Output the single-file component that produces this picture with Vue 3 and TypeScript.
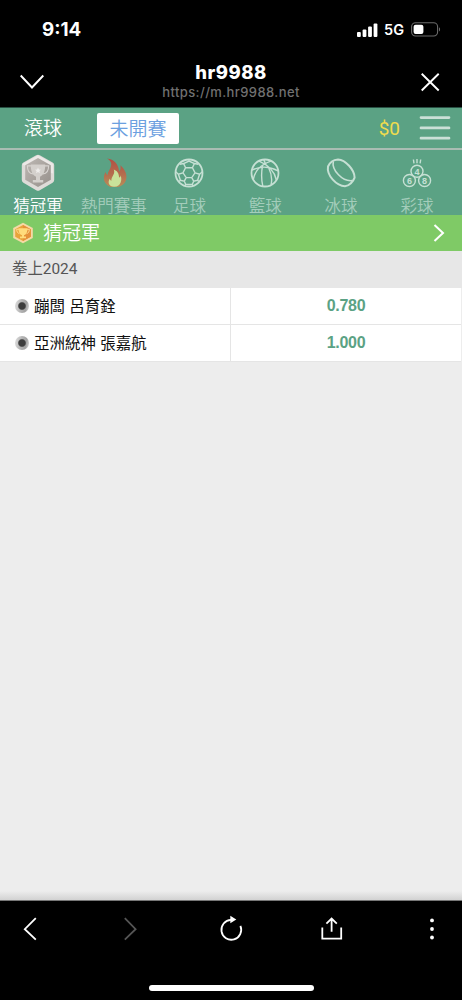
<script setup lang="ts">
import { ref } from 'vue'

interface Sport {
  id: string
  label: string
}

interface Selection {
  name: string
  odds: string
}

const sports: Sport[] = [
  { id: 'champion', label: '猜冠軍' },
  { id: 'hot', label: '熱門賽事' },
  { id: 'soccer', label: '足球' },
  { id: 'basketball', label: '籃球' },
  { id: 'hockey', label: '冰球' },
  { id: 'lottery', label: '彩球' },
]

const selections: Selection[] = [
  { name: '蹦闆 呂育銓', odds: '0.780' },
  { name: '亞洲統神 張嘉航', odds: '1.000' },
]

const active = ref('champion')
</script>

<template>
  <div class="screen">
    <header class="chrome-top">
      <div class="status">
        <span class="time">9:14</span>
        <div class="indicators">
          <svg class="signal" width="21" height="14" viewBox="0 0 21 14" fill="#fff">
            <rect x="0" y="9" width="3.8" height="5" rx="1" />
            <rect x="5.6" y="6.5" width="3.8" height="7.5" rx="1" />
            <rect x="11.1" y="3.5" width="3.8" height="10.5" rx="1" />
            <rect x="16.6" y="0.5" width="3.8" height="13.5" rx="1" />
          </svg>
          <span class="network">5G</span>
          <svg class="battery" width="30" height="15" viewBox="0 0 30 15">
            <rect x="0.6" y="0.8" width="26" height="13.2" rx="4" fill="none" stroke="#6b6b6b" stroke-width="1.1" />
            <rect x="2.6" y="2.8" width="9.8" height="9.2" rx="2" fill="#fff" />
            <path d="M28 5.3c1.4.6 1.4 3.6 0 4.2z" fill="#6b6b6b" />
          </svg>
        </div>
      </div>
      <div class="titlebar">
        <svg width="24" height="16" viewBox="20 74 24 16" fill="none" stroke="#fff" stroke-width="1.9">
          <path d="M20.7 75.5 32 87.5 43.3 75.5" />
        </svg>
        <div class="site">
          <div class="site-name">hr9988</div>
          <div class="site-url">https://m.hr9988.net</div>
        </div>
        <svg width="20" height="20" viewBox="420 72 20 20" fill="none" stroke="#fff" stroke-width="1.9">
          <path d="M421.7 73.7 438.7 90.5M438.7 73.7 421.7 90.5" />
        </svg>
      </div>
    </header>

    <div class="topbar">
      <span class="live">滾球</span>
      <span class="upcoming">未開賽</span>
      <span class="balance">$0</span>
      <svg class="menu" width="32" height="26" viewBox="0 0 32 26" stroke="#cbe0d7" stroke-width="2.7" stroke-linecap="round">
        <path d="M2 2.6H30M2 12.9H30M2 23.2H30" />
      </svg>
    </div>

    <nav class="sports">
      <button
        v-for="sport in sports"
        :key="sport.id"
        class="sport"
        :class="{ active: active === sport.id }"
        @click="active = sport.id"
      >
        <svg v-if="sport.id === 'champion'" width="36" height="40" viewBox="0 0 36 40">
          <defs>
            <linearGradient id="silver" x1="0" y1="0" x2="1" y2="1">
              <stop offset="0" stop-color="#bdb8b4" />
              <stop offset="0.5" stop-color="#aaa49f" />
              <stop offset="1" stop-color="#96908b" />
            </linearGradient>
          </defs>
          <path d="M16.2 2.2q1.8-1 3.6 0L32.6 9.4q1.6.9 1.6 2.7v15q0 1.8-1.6 2.7L19.8 37.2q-1.8 1-3.6 0L3.4 29.8q-1.6-.9-1.6-2.7v-15q0-1.8 1.6-2.7z" fill="#dedbd8" />
          <path d="M18 2.2 33 10.7v9.8L3 12v-1.5z" fill="#f0eeec" opacity=".75" />
          <path d="M18 5 30.8 12.2v14.6L18 34 5.2 26.8V12.2z" fill="url(#silver)" />
          <path d="M11 12.9H7.4c0 4.4 2 7.6 5.6 8M25 12.9h3.6c0 4.4-2 7.6-5.6 8" fill="none" stroke="#d8d4d0" stroke-width="1.1" />
          <path d="M10.8 11.6h14.4c.2 6.8-2 11-5.200 12.200v3.200h3.200v2.400h-10.400V27h3.200v-3.200c-3.200-1.200-5.400-5.400-5.200-12.200z" fill="#d4d0cc" />
          <path d="m18 14.600.9 1.900 2.100.2-1.600 1.400.5 2.100-1.900-1.100-1.900 1.100.5-2.100-1.600-1.400 2.100-.2z" fill="#efedeb" />
        </svg>
        <svg v-else-if="sport.id === 'hot'" width="36" height="40" viewBox="0 0 36 40">
          <defs>
            <linearGradient id="flame" x1="0" y1="0" x2="0" y2="1">
              <stop offset="0" stop-color="#b24f43" />
              <stop offset="0.5" stop-color="#b4694c" />
              <stop offset="1" stop-color="#b88d58" />
            </linearGradient>
          </defs>
          <path d="M11.1 5.5C18 6.2 22.6 11 23.1 18.500c1.500-1.400 1.800-4 1.300-6.300 5 4.400 7.100 10.300 5.600 14.700-1.200 4-4.500 6.500-8.600 7h-7C9.600 32 7.300 28 8 23.600c.2-2 .9-3.500 1.600-4.600.4 1.500 1.100 2.700 2.100 3.100 0-4 3.300-6 3.500-10.600.1-2.400-1.300-4.500-4.100-6z" fill="url(#flame)" />
          <path d="M17.800 16.400c5.200 2.200 5 5.800 5.400 8.200 1.100-.5 1.400-1.400 1.400-2.400 1.700 4 .6 11.600-6.400 11.600-5.500 0-6.800-4.800-4.400-8 .3 1.100.7 1.700 1.600 1.900-.2-4.600 4.200-6.400 2.400-11.300z" fill="#c9e29a" />
        </svg>
        <svg v-else-if="sport.id === 'soccer'" width="36" height="40" viewBox="0 0 36 40" class="line">
          <circle cx="18" cy="20" r="13.5" stroke-width="1.8" />
          <path d="M14.6 14.8h6.8l2.6 5-3.2 4.8h-5.6L12 19.8zM14.6 14.8 12.600 10.500 18 8l5.400 2.500-2 4.300M12.600 10.500 8.800 11.300M23.400 10.500l3.800.8M18 8V6.500M12 19.800l-4.600 1.400-2.700-2.400M24 19.800l4.600 1.400 2.700-2.400M7.400 21.200l2 6M28.600 21.200l-2 6M15.200 24.600l-1.900 3.600-3.900-1-1.400 1.400M20.800 24.600l1.900 3.600 3.900-1 1.400 1.400M13.300 28.200l1.400 3.200h6.600l1.400-3.200M14.700 31.400l-.6 1.400M21.300 31.400l.6 1.400" />
        </svg>
        <svg v-else-if="sport.id === 'basketball'" width="36" height="40" viewBox="0 0 36 40" class="line">
          <circle cx="18" cy="20" r="13.5" stroke-width="1.8" />
          <path d="M12 8.200C21 11.800 27.500 18.600 29.400 27M24 8.200C14 11.500 8 17.700 6.400 26.200M5 17c8.800-4.100 17.400-3.800 26 .8M16.800 6.600c.8 1.800 1.300 3.400 1.800 5.400M15.600 12.500c-1.300 6.500-1.400 13.500.2 20.600M21.500 14.500c2.700 5.200 4 10.800 2.600 17.200" />
        </svg>
        <svg v-else-if="sport.id === 'hockey'" width="36" height="40" viewBox="0 0 36 40" class="line">
          <path d="M5 13.500C6.700 9.500 10.500 6.700 15 6.400c7.500.3 16.600 10.600 16.600 18.200-1.400 4-5.200 8-9.600 8.600C13.600 33 3.500 22.500 5 13.500z" stroke-width="2" />
          <path d="M10.300 8.300C8.500 17 19.500 29.200 29.600 27.600" stroke-width="1.6" />
        </svg>
        <svg v-else width="36" height="40" viewBox="0 0 36 40" class="line">
          <circle cx="18" cy="18.3" r="6" />
          <circle cx="10.4" cy="27.5" r="6" />
          <circle cx="25.6" cy="27.5" r="6" />
          <path d="M14.400 6.500l.6 3.800M18 6v4.200M21.700 6.500l-.6 3.800" />
          <g class="digits">
            <text x="18" y="21.5">4</text>
            <text x="10.4" y="30.7">6</text>
            <text x="25.6" y="30.7">8</text>
          </g>
        </svg>
        <span class="sport-label">{{ sport.label }}</span>
      </button>
    </nav>

    <div class="section">
      <svg class="medal" width="22" height="22" viewBox="0 0 22 22">
        <path d="M11 .7 20.8 6v10L11 21.3 1.2 16V6z" fill="#f5d9a5" />
        <path d="M11 3 18.8 7.2v7.6L11 19l-7.8-4.2V7.2z" fill="#e9a33a" />
        <path d="M11 3 18.8 7.2v7.6L11 19z" fill="#e5903a" />
        <path d="M4.6 7.3H7M17.4 7.3H15M4.6 7.3c.2 2.4 1 4 2.8 4.3M17.4 7.3c-.2 2.4-1 4-2.8 4.3" fill="none" stroke="#ffe196" stroke-width=".9" />
        <path d="M6.5 6.2h9c.1 4-1.3 6.3-3.5 7v1.3h2v1.7H8v-1.7h2v-1.3c-2.2-.7-3.6-3-3.5-7z" fill="#ffdb7c" />
      </svg>
      <span class="section-title">猜冠軍</span>
      <svg class="more" width="12" height="20" viewBox="0 0 12 20" fill="none" stroke="#fff" stroke-width="2">
        <path d="M1.5 2 10 10 1.5 18" />
      </svg>
    </div>

    <div class="league">拳上2024</div>

    <div v-for="item in selections" :key="item.name" class="row">
      <div class="team">
        <span class="bullet"></span>
        <span class="team-name">{{ item.name }}</span>
      </div>
      <div class="odds">{{ item.odds }}</div>
    </div>

    <div class="blank"></div>

    <footer class="chrome-bottom">
      <div class="tools">
        <svg width="24" height="30" viewBox="18 914 24 30"><path d="M35.8 918.2 24.8 929.2l11 10.5" /></svg>
        <svg width="24" height="30" viewBox="118 914 24 30" class="dim"><path d="M124.8 918.2l10.8 11-10.8 10.500" /></svg>
        <svg width="28" height="30" viewBox="217 914 28 30">
          <path d="M231 919.9a9.900 9.900 0 1 0 9.400 6" />
          <path d="M230.3 915.8v7.4l6-3.600z" fill="#fff" stroke="none" />
        </svg>
        <svg width="26" height="30" viewBox="319 914 26 30">
          <path d="M322.3 927.4v11.2h18.9v-11.2M331.6 931.8V918.8M326.4 923.6l5.2-5 5.2 5" />
        </svg>
        <svg width="10" height="30" viewBox="427.2 914 10 30">
          <g fill="#fff" stroke="none">
            <circle cx="432.2" cy="920.4" r="1.9" />
            <circle cx="432.2" cy="929" r="1.9" />
            <circle cx="432.2" cy="937.5" r="1.9" />
          </g>
        </svg>
      </div>
      <div class="home"></div>
    </footer>
  </div>
</template>

<style scoped>
.screen {
  width: 462px;
  height: 1000px;
  display: flex;
  flex-direction: column;
  overflow: hidden;
  background: #ededed;
  font-family: "Liberation Sans", "Noto Sans CJK TC", sans-serif;
}
.screen svg {
  display: block;
  flex: none;
}
.chrome-top {
  flex: none;
  height: 107px;
  background: #000;
  border-bottom: 1px solid #285043;
  box-sizing: content-box;
  color: #fff;
  font-family: Inter, sans-serif;
}
.status {
  height: 59px;
  box-sizing: border-box;
  padding: 0 21px 0 42px;
  display: flex;
  align-items: center;
  justify-content: space-between;
}
.time {
  padding-top: 1px;
  font-size: 18.8px;
  font-weight: 700;
  line-height: 20px;
}
.indicators {
  display: flex;
  align-items: center;
}
.network {
  margin-left: 6px;
  font-size: 14.5px;
  font-weight: 600;
  line-height: 16px;
}
.battery {
  margin-left: 7px;
}
.titlebar {
  height: 46px;
  padding: 0 22px 0 20px;
  display: flex;
  align-items: center;
  justify-content: space-between;
}
.site {
  text-align: center;
  padding-right: 2px;
  margin-top: -1px;
}
.site-name {
  font-size: 18.5px;
  font-weight: 800;
  line-height: 21px;
  letter-spacing: 0.5px;
}
.site-url {
  font-size: 13px;
  font-weight: 500;
  line-height: 18px;
  letter-spacing: 0.4px;
  color: #717171;
}
.topbar {
  flex: none;
  height: 40px;
  background: #5ba284;
  border-bottom: 2px solid #a9bdb3;
  display: flex;
  align-items: center;
  padding: 0 11px 0 24px;
  font-size: 19px;
  font-weight: 350;
}
.live {
  color: #fff;
  line-height: 33px;
}
.upcoming {
  margin-left: 35px;
  width: 82px;
  height: 31px;
  line-height: 33px;
  text-align: center;
  background: #fff;
  border-radius: 2px;
  color: #6ba0e0;
}
.balance {
  margin-left: auto;
  color: #f0dc4e;
  font-family: Roboto, sans-serif;
  font-weight: 400;
}
.menu {
  margin-left: 19px;
}
.sports {
  flex: none;
  height: 65px;
  background: #5ba284;
  display: grid;
  grid-template-columns: repeat(6, 75.8px);
}
.sport {
  border: 0;
  background: none;
  padding: 3px 0 0;
  margin: 0;
  display: flex;
  flex-direction: column;
  align-items: center;
  font-family: inherit;
  color: #a4cdbb;
}
.sport.active {
  color: #fff;
}
.sport-label {
  margin-top: 1px;
  font-size: 16.5px;
  line-height: 25px;
  font-weight: 350;
  white-space: nowrap;
}
.line {
  fill: none;
  stroke: #c6e0d4;
  stroke-width: 1.4;
}
.digits {
  fill: #c6e0d4;
  stroke: none;
  font-size: 9px;
  font-weight: 700;
  text-anchor: middle;
}
.section {
  flex: none;
  height: 36px;
  background: #7fca66;
  display: flex;
  align-items: center;
  padding: 0 17px 0 12px;
  color: #fff;
}
.section-title {
  margin-left: 9px;
  font-size: 19px;
  line-height: 28px;
  padding-top: 2px;
  font-weight: 350;
}
.more {
  margin-left: auto;
}
.league {
  flex: none;
  height: 37px;
  line-height: 37px;
  box-sizing: border-box;
  padding-left: 12px;
  background: #e7e7e7;
  color: #555;
  font-size: 15.4px;
  font-family: Roboto, "Noto Sans CJK TC", sans-serif;
  font-weight: 400;
}
.row {
  flex: none;
  height: 36px;
  width: 461px;
  display: grid;
  grid-template-columns: 230px 230px;
  column-gap: 1px;
  background: #e5e5e5;
  border-bottom: 1px solid #e5e5e5;
}
.team,
.odds {
  background: #fff;
  display: flex;
  align-items: center;
  font-size: 15.5px;
}
.team {
  padding-left: 15px;
  gap: 5px;
  color: #111;
}
.team-name {
  padding-bottom: 2px;
}
.bullet {
  width: 14px;
  height: 14px;
  border-radius: 50%;
  background:
    radial-gradient(circle, #3d3d3d 0 3.2px, transparent 4.4px),
    linear-gradient(100deg, #e2e2e2, #b5b5b5 45%, #a2a2a2 75%, #dedede);
}
.odds {
  justify-content: center;
  color: #5ba284;
  font-weight: 700;
  font-size: 16px;
  letter-spacing: -0.3px;
}
.blank {
  flex: 1;
  background: linear-gradient(to bottom, transparent calc(100% - 9px), #d2d2d2);
}
.chrome-bottom {
  flex: none;
  height: 99px;
  border-top: 1px solid #777;
  background: #000;
  display: flex;
  flex-direction: column;
  align-items: center;
}
.tools {
  width: 100%;
  box-sizing: border-box;
  padding: 13px 25px 0 18px;
  display: grid;
  grid-template-columns: 100px 99px 102px 108.2px 10px;
}
.tools svg {
  fill: none;
  stroke: #fff;
  stroke-width: 1.8;
}
.tools svg.dim {
  stroke: #555;
}
.home {
  margin-top: 41px;
  width: 165px;
  height: 6px;
  border-radius: 3px;
  background: #fff;
}
</style>

<style>
body {
  margin: 0;
}
</style>
